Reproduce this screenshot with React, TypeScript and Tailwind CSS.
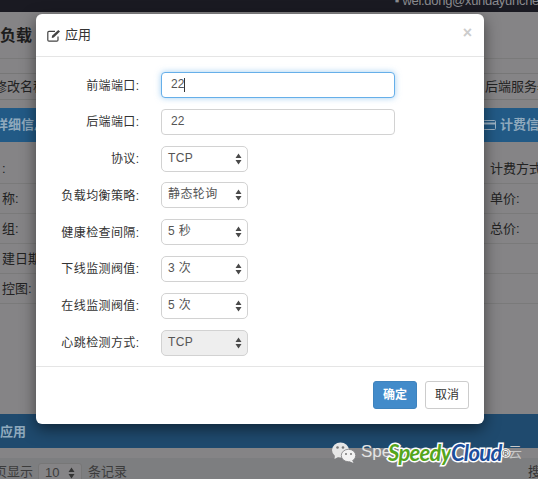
import React from "react";

const font = { fontFamily: '"Liberation Sans","Noto Sans CJK SC",sans-serif' };

function Arrows({ color = "#4a4a4a" }: { color?: string }) {
  return (
    <svg width="7" height="12" viewBox="0 0 7 12" className="shrink-0">
      <path d="M3.5 0.5 L6.5 5 L0.5 5 Z M3.5 11.5 L6.5 7 L0.5 7 Z" fill={color} />
    </svg>
  );
}

function SelectRow({ label, value, disabled }: { label: string; value: string; disabled?: boolean }) {
  return (
    <div className="flex items-center h-[26px] mb-[10.8px]">
      <div className="w-[103.5px] text-right text-[12px] text-[#333] tracking-[0.4px] pt-[1px] whitespace-nowrap">{label}:</div>
      <div className="w-[21.5px]" />
      <div
        className={
          "w-[87px] h-[26px] rounded-[5px] border border-[#d2d2d2] flex items-center justify-between pl-[6px] pr-[5px] text-[12px] text-[#555] tracking-[0.4px] " +
          (disabled ? "bg-[#eeeeee]" : "bg-white")
        }
      >
        <span className="-translate-y-[1px]">{value}</span>
        <Arrows />
      </div>
    </div>
  );
}

function InputRow({ label, value, focus }: { label: string; value: string; focus?: boolean }) {
  return (
    <div className="flex items-center h-[26px] mb-[10.8px]">
      <div className="w-[103.5px] text-right text-[12px] text-[#333] tracking-[0.4px] pt-[1px] whitespace-nowrap">{label}:</div>
      <div className="w-[21.5px]" />
      <div
        className={
          "w-[234px] h-[26px] rounded-[4px] border flex items-center pl-[9px] text-[12px] text-[#555] bg-white " +
          (focus ? "border-[#66afe9] shadow-[0_0_6px_rgba(102,175,233,0.6)]" : "border-[#d2d2d2]")
        }
      >
        <span className="-translate-y-[1px]">{value}</span>
        {focus && <span className="w-px h-[14px] bg-[#333]" />}
      </div>
    </div>
  );
}

function BgRow({ left, right }: { left: string; right?: string }) {
  return (
    <div className="flex justify-between h-[30px] items-center border-b border-[#7a7a7a] text-[13px] text-[#222]">
      <span className="ml-[2px] whitespace-nowrap">{left}</span>
      {right && <span className="w-[48px] whitespace-nowrap">{right}</span>}
    </div>
  );
}

export default function App() {
  return (
    <div className="relative w-[538px] h-[479px] overflow-hidden bg-[#858486]" style={font}>
      {/* Background page */}
      <div className="flex flex-col h-full">
        <div className="h-[12px] bg-[#1a1a22] shrink-0 flex justify-end items-start overflow-hidden">
          <span className="text-[13px] leading-[14px] tracking-[-0.3px] text-[#8a8a8e] whitespace-nowrap mr-[-1px] -translate-y-[6px]">▪ wei.dong@xundayunche</span>
        </div>
        <div className="h-[47px] shrink-0 flex items-start border-b border-[#7a7a7a] text-[16px] font-bold text-[#1d1d1d]">
          <span className="mt-[12px]">负载</span>
        </div>
        <div className="mt-[14px] h-[27px] shrink-0 flex justify-between items-center border-y border-[#777] text-[13px] text-[#222]">
          <span className="ml-[-6px] whitespace-nowrap">修改名称</span>
          <span className="whitespace-nowrap mr-[-12px]">后端服务器</span>
        </div>
        <div className="mt-[8px] h-[34px] shrink-0 bg-[#225a86] flex justify-between items-center text-[13px] font-bold text-[#8fa9bd]">
          <span className="ml-[-5px] whitespace-nowrap">详细信息</span>
          <span className="flex items-center gap-[4px] whitespace-nowrap mr-[-14px]">
            <svg width="13" height="10" viewBox="0 0 13 10" fill="none" stroke="#9db3c4" strokeWidth="1">
              <rect x="0.5" y="0.5" width="12" height="9" rx="1" />
              <path d="M0.5 3.5H12.5" strokeWidth="2" />
            </svg>
            计费信息
          </span>
        </div>
        <div className="mt-[12px] flex flex-col shrink-0">
          <BgRow left=":" right="计费方式" />
          <BgRow left="称:" right="单价:" />
          <BgRow left="组:" right="总价:" />
          <BgRow left="建日期" />
          <BgRow left="控图:" />
        </div>
        <div className="flex-1" />
        <div className="h-[34px] shrink-0 bg-[#1f4a6e] flex items-center text-[13px] font-bold text-[#8fa9bd]">
          <span className="pt-[1px]">应用</span>
        </div>
        <div className="h-[10px] shrink-0 bg-[#858486]" />
        <div className="h-[21px] shrink-0 bg-[#7d7e80] flex items-start pt-[6px] text-[13px] leading-[16px] text-[#3c3c3c]">
          <span className="ml-[-6px] whitespace-nowrap">页显示</span>
          <span className="ml-[5px] mr-[6px] w-[44px] h-[20px] shrink-0 rounded-[3px] bg-[#858486] border border-[#777] flex items-center justify-between px-[6px] mt-[-1px]">
            10
            <Arrows color="#333" />
          </span>
          <span className="whitespace-nowrap">条记录</span>
          <span className="ml-auto mr-[-3px] text-[#333]">搜</span>
        </div>
      </div>

      {/* Modal */}
      <div className="absolute left-[36px] top-[14px] w-[448px] h-[410px] bg-white rounded-[6px] shadow-[0_5px_15px_rgba(0,0,0,0.5)] flex flex-col">
        <div className="h-[43px] shrink-0 border-b border-[#e5e5e5] flex items-center pl-[11px] pr-[12px] text-[#333]">
          <svg width="14" height="13" viewBox="0 0 14 13" fill="none" stroke="#444" strokeWidth="1.2" className="mr-[4px]">
            <path d="M11 7.5V11a1.2 1.2 0 0 1-1.2 1.2H2A1.2 1.2 0 0 1 .8 11V3.6A1.2 1.2 0 0 1 2 2.4h6" />
            <path d="M5 6.8 11.3 .9 13 2.6 6.8 8.6 4.8 9Z" fill="#444" stroke="none" />
          </svg>
          <span className="text-[13px]">应用</span>
          <span className="ml-auto text-[16px] font-bold text-[#cccccc] leading-none -translate-y-[2px]">×</span>
        </div>
        <div className="h-[310px] shrink-0 border-b border-[#e5e5e5] pt-[15px]">
          <InputRow label="前端端口" value="22" focus />
          <InputRow label="后端端口" value="22" />
          <SelectRow label="协议" value="TCP" />
          <SelectRow label="负载均衡策略" value="静态轮询" />
          <SelectRow label="健康检查间隔" value="5 秒" />
          <SelectRow label="下线监测阀值" value="3 次" />
          <SelectRow label="在线监测阀值" value="5 次" />
          <SelectRow label="心跳检测方式" value="TCP" disabled />
        </div>
        <div className="flex-1 flex items-start justify-end gap-[8px] pt-[14px] pr-[15px]">
          <button className="w-[44px] h-[28px] rounded-[3px] bg-[#428bca] border border-[#3f83bd] text-white text-[12px] font-bold">确定</button>
          <button className="w-[44px] h-[28px] rounded-[3px] bg-white border border-[#cccccc] text-[#333] text-[12px]">取消</button>
        </div>
      </div>

      {/* Watermark */}
      <svg className="absolute left-[331px] top-[441px]" width="26" height="23" viewBox="0 0 26 23">
        <ellipse cx="9.5" cy="9" rx="8.5" ry="7.6" fill="#e6e6e6" />
        <path d="M4 14 L3.5 18 L8 15.5Z" fill="#e6e6e6" />
        <ellipse cx="17.5" cy="14.5" rx="7.2" ry="6.2" fill="#f2f2f2" stroke="#7d7e80" strokeWidth="0.8" />
        <path d="M21 19 L22.5 22 L18 20Z" fill="#f2f2f2" />
        <circle cx="6.5" cy="6.5" r="1.3" fill="#777" />
        <circle cx="12" cy="6.5" r="1.3" fill="#777" />
        <circle cx="15" cy="13" r="1" fill="#777" />
        <circle cx="20" cy="13" r="1" fill="#777" />
      </svg>
      <span className="absolute left-[361px] top-[442px] text-[17px] leading-[20px] text-[#e4e4e4]">Spe</span>
      <span className="absolute left-[508px] top-[442px] text-[14px] leading-[20px] text-[#c8c8c8]">云</span>
      <div
        className="absolute left-[388px] top-[439px] text-[22px] leading-[28px] font-bold italic whitespace-nowrap tracking-[-0.7px] [-webkit-text-stroke:3px_white] [paint-order:stroke_fill]"
        style={{ fontFamily: '"Lato","Liberation Sans",sans-serif' }}
      >
        <span className="text-[#55a51c]">Speedy</span>
        <span className="text-[#1d4f9c]">Cloud</span>
        <span className="text-[10px] align-top text-[#777] [-webkit-text-stroke:2px_white]">®</span>
      </div>
    </div>
  );
}
